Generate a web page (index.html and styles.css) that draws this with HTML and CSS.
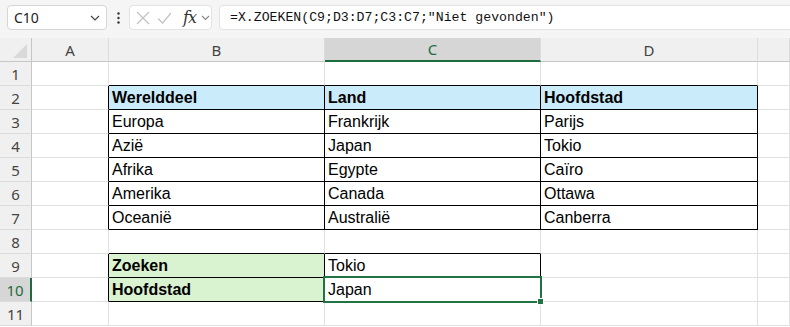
FILE: index.html
```html
<!DOCTYPE html>
<html lang="nl">
<head>
    <meta charset="UTF-8">
    <meta name="viewport" content="width=device-width, initial-scale=1.0">
    <link rel="stylesheet" href="styles.css">
</head>
<body>
    <div class="toolbar">
        <div class="namebox">
            <span>C10</span>
            <svg class="chev" width="10" height="6" viewBox="0 0 10 6"><path d="M1 1l4 4 4-4" fill="none" stroke="#444" stroke-width="1.2"/></svg>
        </div>
        <div class="dots">
            <svg width="3" height="12" viewBox="0 0 3 12"><circle cx="1.5" cy="1.5" r="1.2" fill="#333"/><circle cx="1.5" cy="6" r="1.2" fill="#333"/><circle cx="1.5" cy="10.5" r="1.2" fill="#333"/></svg>
        </div>
        <div class="fx-box">
            <svg class="ico" width="14" height="14" viewBox="0 0 14 14"><path d="M1 1l12 12M13 1L1 13" fill="none" stroke="#c2c2c2" stroke-width="1.2"/></svg>
            <svg class="ico" width="15" height="12" viewBox="0 0 15 12"><path d="M1 6.5l4.5 4.5L14 1" fill="none" stroke="#c2c2c2" stroke-width="1.2"/></svg>
            <span class="fx">fx</span>
            <svg class="chev small" width="9" height="6" viewBox="0 0 9 6"><path d="M1 1l3.5 3.5L8 1" fill="none" stroke="#888" stroke-width="1.1"/></svg>
        </div>
        <div class="formula">=X.ZOEKEN(C9;D3:D7;C3:C7;"Niet gevonden")</div>
    </div>

    <div class="sheet">
        <div class="hd corner"><span class="tri"></span></div>
        <div class="hd col">A</div>
        <div class="hd col">B</div>
        <div class="hd col active">C</div>
        <div class="hd col">D</div>
        <div class="hd col last"></div>

        <div class="hd row">1</div>
        <div class="c"></div>
        <div class="c eb"></div>
        <div class="c eb"></div>
        <div class="c eb"></div>
        <div class="c"></div>

        <div class="hd row">2</div>
        <div class="c er"></div>
        <div class="c t head">Werelddeel</div>
        <div class="c t head">Land</div>
        <div class="c t head">Hoofdstad</div>
        <div class="c"></div>

        <div class="hd row">3</div>
        <div class="c er"></div>
        <div class="c t">Europa</div>
        <div class="c t">Frankrijk</div>
        <div class="c t">Parijs</div>
        <div class="c"></div>

        <div class="hd row">4</div>
        <div class="c er"></div>
        <div class="c t">Azië</div>
        <div class="c t">Japan</div>
        <div class="c t">Tokio</div>
        <div class="c"></div>

        <div class="hd row">5</div>
        <div class="c er"></div>
        <div class="c t">Afrika</div>
        <div class="c t">Egypte</div>
        <div class="c t">Caïro</div>
        <div class="c"></div>

        <div class="hd row">6</div>
        <div class="c er"></div>
        <div class="c t">Amerika</div>
        <div class="c t">Canada</div>
        <div class="c t">Ottawa</div>
        <div class="c"></div>

        <div class="hd row">7</div>
        <div class="c er"></div>
        <div class="c t">Oceanië</div>
        <div class="c t">Australië</div>
        <div class="c t">Canberra</div>
        <div class="c"></div>

        <div class="hd row">8</div>
        <div class="c"></div>
        <div class="c eb"></div>
        <div class="c eb"></div>
        <div class="c"></div>
        <div class="c"></div>

        <div class="hd row">9</div>
        <div class="c er"></div>
        <div class="c t label">Zoeken</div>
        <div class="c t">Tokio</div>
        <div class="c"></div>
        <div class="c"></div>

        <div class="hd row active">10</div>
        <div class="c er"></div>
        <div class="c t label">Hoofdstad</div>
        <div class="c t selected">Japan<span class="handle"></span></div>
        <div class="c"></div>
        <div class="c"></div>

        <div class="hd row">11</div>
        <div class="c"></div>
        <div class="c"></div>
        <div class="c"></div>
        <div class="c"></div>
        <div class="c"></div>
    </div>
</body>
</html>
```

FILE: styles.css
```css
body {
    margin: 0;
    overflow: hidden;
    background-color: #ffffff;
    font-family: "Liberation Sans", Arial, sans-serif;
}
.toolbar {
    height: 38px;
    box-sizing: border-box;
    background-color: #f5f5f5;
    display: flex;
    align-items: flex-start;
    padding: 5px 0 0 7px;
}
.namebox {
    width: 100px;
    height: 25px;
    box-sizing: border-box;
    background-color: #ffffff;
    border: 1px solid #d6d6d6;
    border-radius: 4px;
    display: flex;
    align-items: center;
    justify-content: space-between;
    padding: 0 6px 0 6px;
    font-family: "Noto Sans", sans-serif;
    font-size: 14px;
    color: #222;
}
.dots {
    width: 22px;
    height: 25px;
    display: flex;
    align-items: center;
    justify-content: center;
}
.fx-box {
    width: 83px;
    height: 25px;
    box-sizing: border-box;
    background-color: #ffffff;
    border: 1px solid #e2e2e2;
    border-radius: 4px;
    display: flex;
    align-items: center;
    padding-left: 6px;
}
.fx-box .ico {
    margin-right: 7px;
}
.fx {
    font-family: "DejaVu Serif", "Liberation Serif", serif;
    font-style: italic;
    font-size: 16px;
    color: #333;
    margin-left: 4px;
    letter-spacing: -1px;
}
.chev.small {
    margin-left: 5px;
}
.formula {
    flex: 1;
    height: 25px;
    box-sizing: border-box;
    margin-left: 7px;
    margin-right: -6px;
    background-color: #ffffff;
    border: 1px solid #e2e2e2;
    border-radius: 4px;
    padding-left: 10px;
    line-height: 23px;
    font-family: "Liberation Mono", monospace;
    font-size: 13.2px;
    color: #111;
    white-space: nowrap;
}
.sheet {
    display: grid;
    grid-template-columns: 32px 77px 216px 216px 217px 1fr;
    grid-auto-rows: 24px;
}
.sheet > div {
    box-sizing: border-box;
    border-right: 1px solid #e1e1e1;
    border-bottom: 1px solid #e1e1e1;
}
.hd {
    background-color: #f0f0f0;
    color: #444;
    font-family: "Noto Sans", sans-serif;
    font-size: 15px;
    display: flex;
    align-items: center;
    justify-content: center;
}
.sheet > .col {
    border-bottom-color: #c6c6c6;
    border-right-color: #dcdcdc;
}
.sheet > .row {
    border-right-color: #c6c6c6;
    border-bottom-color: #dcdcdc;
}
.sheet > .corner {
    position: relative;
    border-right-color: #c6c6c6;
    border-bottom-color: #c6c6c6;
}
.tri {
    position: absolute;
    right: 4px;
    bottom: 3px;
    width: 0;
    height: 0;
    border-left: 14px solid transparent;
    border-bottom: 14px solid #d9d9d9;
}
.sheet > .col.active {
    background-color: #d6d6d6;
    color: #1e6b3f;
    border-bottom: 2px solid #1e6b3f;
}
.sheet > .row.active {
    background-color: #d6d6d6;
    color: #1e6b3f;
    border-right: 2px solid #1e6b3f;
}
.t {
    font-size: 16px;
    color: #000;
    line-height: 24px;
    padding-left: 3px;
    white-space: nowrap;
}
.sheet > .t,
.sheet > .eb {
    border-bottom-color: #000;
}
.sheet > .t,
.sheet > .er {
    border-right-color: #000;
}
.head {
    background-color: #caebfa;
    font-weight: bold;
}
.label {
    background-color: #d9f2d0;
    font-weight: bold;
}
.selected {
    position: relative;
}
.selected::after {
    content: "";
    position: absolute;
    left: -2px;
    top: -2px;
    right: -2px;
    bottom: -2px;
    border: 2px solid #217346;
}
.handle {
    position: absolute;
    right: -4px;
    bottom: -4px;
    width: 5px;
    height: 5px;
    background-color: #217346;
    border: 1px solid #ffffff;
    z-index: 1;
}
```
